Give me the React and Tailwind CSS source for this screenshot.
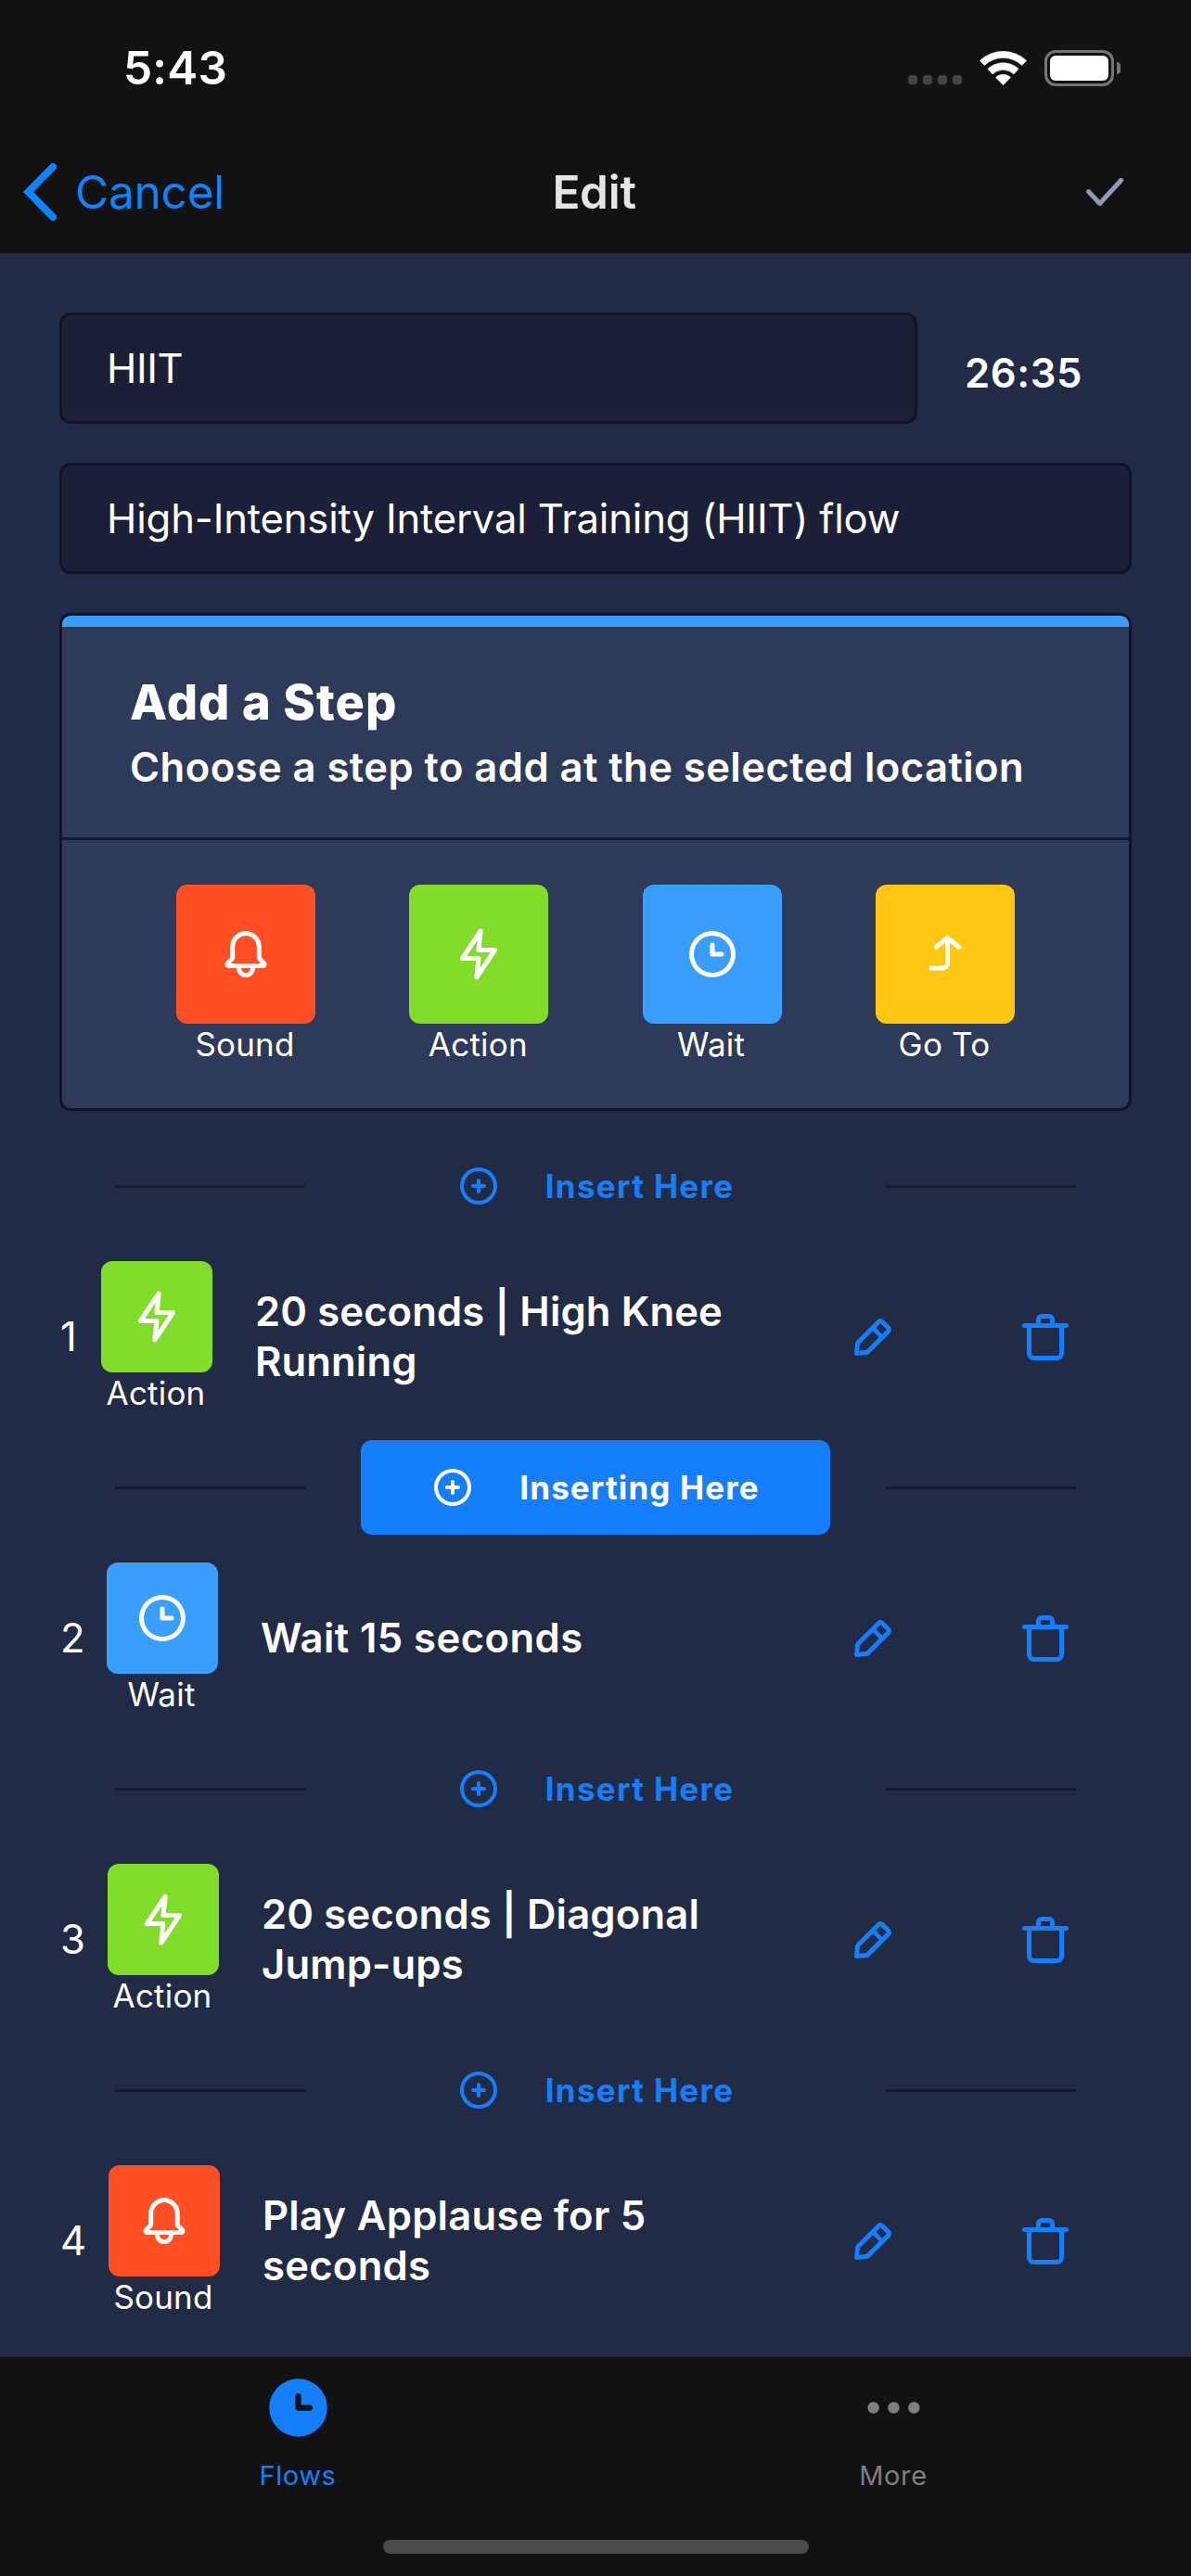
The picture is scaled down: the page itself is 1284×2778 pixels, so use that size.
const ICONS = {
  bell: ["M20.52 15.21l-1.8-1.81V8.94a6.86 6.86 0 0 0-5.82-6.88 6.74 6.74 0 0 0-7.62 6.67v4.67l-1.8 1.81A1.64 1.64 0 0 0 4.64 18H8v.34A3.84 3.84 0 0 0 12 22a3.84 3.84 0 0 0 4-3.66V18h3.36a1.64 1.64 0 0 0 1.16-2.79zM14 18.34A1.88 1.88 0 0 1 12 20a1.88 1.88 0 0 1-2-1.66V18h4zM5.51 16l1.18-1.18a2 2 0 0 0 .59-1.42V8.73A4.73 4.73 0 0 1 8.9 5.17 4.67 4.67 0 0 1 12.64 4a4.86 4.86 0 0 1 4.08 4.9v4.5a2 2 0 0 0 .58 1.42L18.49 16z"],
  flash: ["M11.11 23a1 1 0 0 1-.34-.06 1 1 0 0 1-.65-1.05l.77-7.09H5a1 1 0 0 1-.83-1.56l7.89-11.8a1 1 0 0 1 1.17-.38 1 1 0 0 1 .65 1l-.77 7.14H19a1 1 0 0 1 .83 1.56l-7.89 11.8a1 1 0 0 1-.83.44zM6.87 12.8H12a1 1 0 0 1 .74.33 1 1 0 0 1 .25.78l-.45 4.15 4.59-6.86H12a1 1 0 0 1-1-1.11l.45-4.15z"],
  clock: [
    "M12 2a10 10 0 1 0 10 10A10 10 0 0 0 12 2zm0 18a8 8 0 1 1 8-8 8 8 0 0 1-8 8z",
    "M16 11h-3V8a1 1 0 0 0-2 0v4a1 1 0 0 0 1 1h4a1 1 0 0 0 0-2z",
  ],
  clockSolid: ["M12 2a10 10 0 1 0 10 10A10 10 0 0 0 12 2zm4 11h-4a1 1 0 0 1-1-1V8a1 1 0 0 1 2 0v3h3a1 1 0 0 1 0 2z"],
  goTo: ["M18.62 8.22l-5-4a1 1 0 0 0-1.24 0l-5 4a1 1 0 0 0 1.24 1.56L12 7.08V16a1 1 0 0 1-1 1H6a1 1 0 0 0 0 2h5a3 3 0 0 0 3-3V7.08l3.38 2.7A1 1 0 0 0 18 10a1 1 0 0 0 .78-.38 1 1 0 0 0-.16-1.4z"],
  plus: [
    "M12 2a10 10 0 1 0 10 10A10 10 0 0 0 12 2zm0 18a8 8 0 1 1 8-8 8 8 0 0 1-8 8z",
    "M15 11h-2V9a1 1 0 0 0-2 0v2H9a1 1 0 0 0 0 2h2v2a1 1 0 0 0 2 0v-2h2a1 1 0 0 0 0-2z",
  ],
  pencil: ["M19.4 7.34L16.66 4.6A2 2 0 0 0 14 4.53l-9 9a2 2 0 0 0-.57 1.21L4 18.91a1 1 0 0 0 .29.8A1 1 0 0 0 5 20h.09l4.17-.38a2 2 0 0 0 1.21-.57l9-9a1.92 1.92 0 0 0-.07-2.71zM9.08 17.62l-3 .28.27-3L12 9.32l2.7 2.7zM16 10.68L13.32 8l1.95-2L18 8.73z"],
  trash: ["M21 6h-5V4.33A2.42 2.42 0 0 0 13.5 2h-3A2.42 2.42 0 0 0 8 4.33V6H3a1 1 0 0 0 0 2h1v11a3 3 0 0 0 3 3h10a3 3 0 0 0 3-3V8h1a1 1 0 0 0 0-2zM10 4.33c0-.16.21-.33.5-.33h3c.29 0 .5.17.5.33V6h-4zM18 19a1 1 0 0 1-1 1H7a1 1 0 0 1-1-1V8h12z"],
  check: ["M9.86 18a1 1 0 0 1-.73-.32l-4.86-5.17a1 1 0 1 1 1.46-1.37l4.12 4.39 8.41-9.2a1 1 0 1 1 1.48 1.34l-9.14 10a1 1 0 0 1-.73.33z"],
  more: [
    "M10 12a2 2 0 1 0 4 0a2 2 0 1 0-4 0z",
    "M17 12a2 2 0 1 0 4 0a2 2 0 1 0-4 0z",
    "M3 12a2 2 0 1 0 4 0a2 2 0 1 0-4 0z",
  ],
};

function Icon({ name, className }) {
  return (
    <svg viewBox="0 0 24 24" fill="currentColor" className={`shrink-0 ${className}`} aria-hidden="true">
      {ICONS[name].map((d) => (
        <path key={d} d={d} />
      ))}
    </svg>
  );
}

const KINDS = {
  sound: { label: "Sound", icon: "bell", bg: "bg-[#ff4f24]" },
  action: { label: "Action", icon: "flash", bg: "bg-[#82dd2b]" },
  wait: { label: "Wait", icon: "clock", bg: "bg-[#3a9eff]" },
  goTo: { label: "Go To", icon: "goTo", bg: "bg-[#ffc614]" },
};

const STEPS = [
  { kind: "action", title: "20 seconds | High Knee Running", numberWidth: "w-[44px]", spacing: "tracking-[0.1px]" },
  { kind: "wait", title: "Wait 15 seconds", numberWidth: "w-[50px]", spacing: "tracking-[0.42px]", selected: true },
  { kind: "action", title: "20 seconds | Diagonal Jump-ups", numberWidth: "w-[51px]", spacing: "tracking-[0.15px]" },
  { kind: "sound", title: "Play Applause for 5 seconds", numberWidth: "w-[52px]", spacing: "tracking-[0.25px]" },
];

function Tile({ kind, size }) {
  const { label, icon, bg } = KINDS[kind];
  return (
    <div className="flex shrink-0 flex-col items-center">
      <div className={`flex items-center justify-center rounded-xl ${size} ${bg}`}>
        <Icon name={icon} className="size-[60px]" />
      </div>
      <div className="h-[43px] pr-[2px] text-[35px] leading-[45px] tracking-[0.2px]">{label}</div>
    </div>
  );
}

function StatusBar() {
  return (
    <div className="flex h-[146px] items-center justify-between pr-[76px] pl-[133px]">
      <div className="text-[49.5px] font-semibold tracking-[0.2px]">5:43</div>
      <div className="flex items-center">
        <div className="mt-[26px] flex gap-[5.5px]">
          {[0, 1, 2, 3].map((n) => (
            <div key={n} className="size-[10.5px] rounded-[3.5px] bg-[#444444]" />
          ))}
        </div>
        <svg viewBox="0 0 51 37" className="ml-[19px] h-[37px] w-[51px]" fill="#fff" stroke="#fff" strokeWidth="0.6" strokeLinejoin="round">
          <path d="M0.4 10.3A36.7 36.7 0 0 1 50.6 10.3L45.7 15.4A29.4 29.4 0 0 0 5.3 15.4Z" />
          <path d="M8.9 19.3A24.3 24.3 0 0 1 42.1 19.3L36.9 24.9A16.6 16.6 0 0 0 14.1 24.9Z" />
          <path d="M17.5 28.5A11.7 11.7 0 0 1 33.5 28.5L25.5 36.7Z" />
        </svg>
        <div className="ml-[19px] flex h-[39px] w-[75px] rounded-[12px] border-3 border-[#757575] p-[3px]">
          <div className="flex-1 rounded-[6px] bg-white" />
        </div>
        <div className="ml-[3px] h-[13px] w-[4px] rounded-r-full bg-[#757575]" />
      </div>
    </div>
  );
}

function NavBar() {
  return (
    <div className="grid h-[122px] grid-cols-3 items-center pr-[63px] pl-[25px]">
      <div className="flex items-center gap-5 text-[49.5px] tracking-[-0.2px] text-[#0a84ff]">
        <svg viewBox="0 0 36 62" className="h-[62px] w-[36px]" fill="none" stroke="currentColor" strokeWidth="8" strokeLinecap="round" strokeLinejoin="miter">
          <path d="M32 4L5.6 31L32 58" />
        </svg>
        <span className="pt-px">Cancel</span>
      </div>
      <div className="pl-[35px] text-center text-[49.5px] font-semibold tracking-[-0.27px] text-[#e5e5e7]">Edit</div>
      <Icon name="check" className="size-[60px] justify-self-end text-[#8f9bb3]" />
    </div>
  );
}

function InsertRow({ selected }) {
  return (
    <div className="flex h-[102px] items-center justify-between pr-[124px] pl-[124px]">
      <div className="h-[3px] w-[205px] bg-[#151a30]" />
      <div
        className={`flex h-full w-[506px] items-center justify-center gap-[48px] rounded-xl pr-px text-[35px] font-bold ${
          selected ? "bg-[#157efb] tracking-[1.12px] text-white" : "tracking-[1.3px] text-[#157efb]"
        }`}
      >
        <Icon name="plus" className="size-[48px]" />
        <span>{selected ? "Inserting Here" : "Insert Here"}</span>
      </div>
      <div className="h-[3px] w-[205px] bg-[#151a30]" />
    </div>
  );
}

function StepRow({ index, kind, title, numberWidth, spacing }) {
  return (
    <div className="flex h-[223px] items-center pr-[127px] pl-[65px]">
      <div className={`shrink-0 text-[43.6px] ${numberWidth}`}>{index}</div>
      <Tile kind={kind} size="size-[120px]" />
      <div className={`ml-[46px] w-[560px] text-[43.6px] leading-[54px] font-semibold ${spacing}`}>{title}</div>
      <div className="ml-auto flex gap-[126px] text-[#157efb]">
        <Icon name="pencil" className="size-[60px]" />
        <Icon name="trash" className="size-[60px]" />
      </div>
    </div>
  );
}

function Tab({ icon, label, color }) {
  return (
    <div className={`flex flex-col items-center ${color}`}>
      <Icon name={icon} className="size-[75px]" />
      <div className="mt-[18px] text-[29px] leading-9 tracking-[0.6px]">{label}</div>
    </div>
  );
}

export default function App() {
  return (
    <div className="flex h-[2778px] w-[1284px] flex-col overflow-hidden bg-[#222b45] font-[Inter,sans-serif] text-white">
      <header className="h-[274px] shrink-0 border-b border-[#272729] bg-[#121212]">
        <StatusBar />
        <NavBar />
      </header>

      <main className="min-h-0 flex-1 overflow-hidden pt-[63px]">
        <div className="flex items-center pl-16">
          <div className="flex h-[120px] w-[925px] items-center rounded-xl border-3 border-[#101426] bg-[#1b2038] pt-px pl-[48px] text-[43.6px] tracking-[-0.4px]">
            HIIT
          </div>
          <div className="mt-[12px] ml-[51px] text-[43.6px] font-semibold tracking-[0.6px]">26:35</div>
        </div>
        <div className="mx-16 mt-[42px] flex h-[120px] items-center rounded-xl border-3 border-[#101426] bg-[#1b2038] pt-px pl-[48px] text-[43.6px] tracking-[-0.17px]">
          High-Intensity Interval Training (HIIT) flow
        </div>

        <section className="mx-16 mt-[42px] h-[537px] overflow-hidden rounded-xl border-3 border-[#101426] bg-[#2e3a59]">
          <div className="h-3 bg-[#3a9eff]" />
          <div className="h-[230px] border-b-3 border-[#151a30] px-[73px] pt-[45px]">
            <h1 className="text-[52.4px] leading-[72px] font-extrabold tracking-[1.03px]">Add a Step</h1>
            <p className="text-[43.6px] leading-[69px] font-semibold tracking-[0.43px]">
              Choose a step to add at the selected location
            </p>
          </div>
          <div className="flex justify-between px-[123px] pt-12">
            <Tile kind="sound" size="size-[150px]" />
            <Tile kind="action" size="size-[150px]" />
            <Tile kind="wait" size="size-[150px]" />
            <Tile kind="goTo" size="size-[150px]" />
          </div>
        </section>

        <div className="mt-[30px]">
          {STEPS.map((step, i) => (
            <div key={step.title}>
              <InsertRow selected={step.selected} />
              <StepRow index={i + 1} {...step} />
            </div>
          ))}
        </div>
      </main>

      <footer className="flex h-[237px] shrink-0 flex-col items-center border-t border-[#272729] bg-[#121212] pt-[17px]">
        <div className="grid w-full grid-cols-2">
          <Tab icon="clockSolid" label="Flows" color="text-[#157efb]" />
          <Tab icon="more" label="More" color="text-[#7f7f7f]" />
        </div>
        <div className="mt-[51px] h-[15px] w-[459px] rounded-full bg-[#4b4b4b]" />
      </footer>
    </div>
  );
}
